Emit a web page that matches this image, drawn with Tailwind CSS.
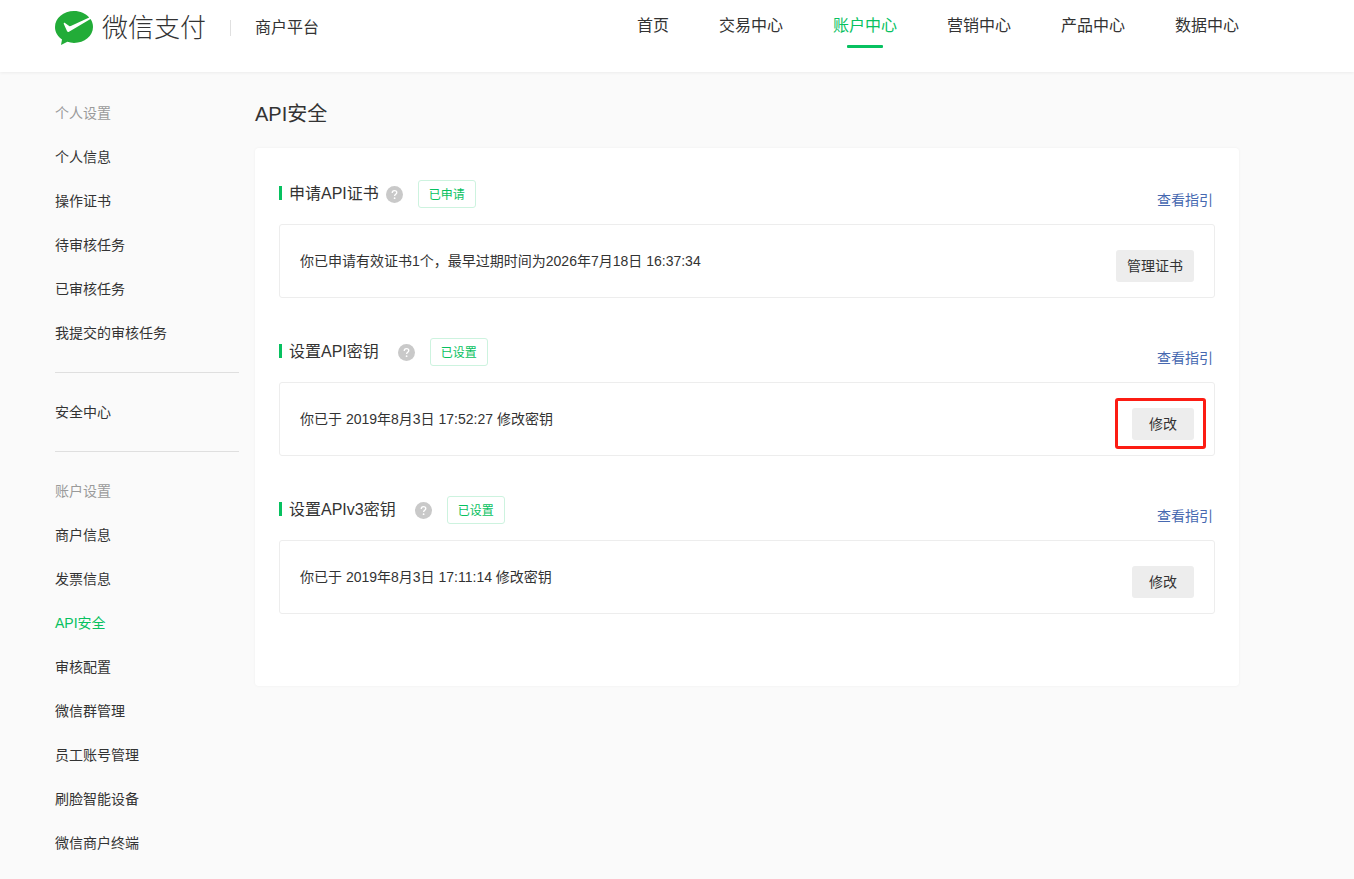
<!DOCTYPE html>
<html lang="zh-CN">
<head>
<meta charset="utf-8">
<meta name="viewport" content="width=device-width, initial-scale=1">
<title>微信支付 商户平台</title>
<script src="https://cdn.jsdelivr.net/npm/@tailwindcss/browser@4"></script>
</head>
<body class="min-h-screen bg-[#fafafa] font-['Liberation_Sans','Noto_Sans_CJK_SC',sans-serif] text-sm text-[#333]">
<header class="flex h-[72px] items-start justify-between bg-white pr-[115px] pl-[55px] shadow-[0_1px_3px_rgba(0,0,0,0.06)]">
  <div class="flex h-14 items-center">
    <a href="#" class="flex items-center gap-[9px] text-[26px] leading-8 font-light text-[#333]">
      <svg class="h-[34px] w-[38px]" viewBox="0 0 38 34" aria-hidden="true">
        <path fill="#22ac38" d="M19 0C8.500 0 0 7.200 0 16c0 5.100 2.700 9.500 7 12.400L6 34l6.400-3.200c2.100.7 4.300 1.100 6.600 1.100 10.500 0 19-7.100 19-15.900 0-2.900-.9-5.700-2.500-8L14 20.800c-.7.400-1.500.2-1.900-.6L8.800 13c-.3-.8.5-1.500 1.200-1l4.200 2.900c.5.300 1.100.3 1.600.1L34.200 6.400C30.700 2.500 25.200 0 19 0Z"/>
      </svg>
      <span>微信支付</span>
    </a>
    <span class="mx-6 h-4 w-px bg-[#e0e0e0]"></span>
    <span class="text-base">商户平台</span>
  </div>
  <nav class="flex gap-[50px] text-base leading-[52px]">
    <a href="#">首页</a>
    <a href="#">交易中心</a>
    <a href="#" class="relative text-[#07c160]">账户中心<span class="absolute top-[45px] left-1/2 h-[3px] w-9 -translate-x-1/2 rounded-[1px] bg-[#07c160]"></span></a>
    <a href="#">营销中心</a>
    <a href="#">产品中心</a>
    <a href="#">数据中心</a>
  </nav>
</header>
<div class="flex gap-4 pr-[115px] pl-[55px] pt-[19px]">
  <aside class="w-[184px] shrink-0 leading-[44px]">
    <h2 class="text-[#9a9a9a]">个人设置</h2>
    <ul>
      <li><a href="#">个人信息</a></li>
      <li><a href="#">操作证书</a></li>
      <li><a href="#">待审核任务</a></li>
      <li><a href="#">已审核任务</a></li>
      <li><a href="#">我提交的审核任务</a></li>
    </ul>
    <hr class="my-[17px] border-[#dfdfdf]">
    <a href="#" class="block">安全中心</a>
    <hr class="my-[17px] border-[#dfdfdf]">
    <h2 class="text-[#9a9a9a]">账户设置</h2>
    <ul>
      <li><a href="#">商户信息</a></li>
      <li><a href="#">发票信息</a></li>
      <li><a href="#" class="text-[#07c160]">API安全</a></li>
      <li><a href="#">审核配置</a></li>
      <li><a href="#">微信群管理</a></li>
      <li><a href="#">员工账号管理</a></li>
      <li><a href="#">刷脸智能设备</a></li>
      <li><a href="#">微信商户终端</a></li>
    </ul>
  </aside>
  <main class="min-w-0 flex-1">
    <h1 class="mb-[10px] text-xl leading-[47px]">API安全</h1>
    <div class="flex flex-col gap-10 rounded bg-white px-6 pt-8 pb-[72px] shadow-[0_0_3px_rgba(0,0,0,0.05)]">
      <section>
        <div class="mb-4 flex h-7 items-center">
          <span class="mb-0.5 h-[14px] w-[3px] bg-[#07c160]"></span>
          <h2 class="ml-[7px] text-base leading-6">申请API证书</h2>
          <button type="button" aria-label="帮助" class="ml-[7px]"><svg class="size-[17px]" viewBox="0 0 17 17"><circle cx="8.500" cy="8.500" r="8.500" fill="#c9c9c9"/><path d="M6.200 6.900C6.200 5.400 7.200 4.600 8.500 4.600s2.300.8 2.300 2c0 1.700-2.200 1.700-2.200 3.400" fill="none" stroke="#fff" stroke-width="1.300"/><circle cx="8.600" cy="12.200" r=".9" fill="#fff"/></svg></button>
          <span class="ml-[15px] flex h-7 w-[58px] items-center justify-center rounded-[3px] border border-[#cdf3df] pt-0.5 text-xs text-[#07c160]">已申请</span>
          <a href="#" class="mr-0.5 ml-auto self-end leading-4 text-[#4668b0]">查看指引</a>
        </div>
        <div class="flex items-start justify-between rounded-[3px] border border-[#ededed] px-5 pt-[25px] pb-[15px]">
          <p class="leading-[22px]">你已申请有效证书1个，最早过期时间为2026年7月18日 16:37:34</p>
          <button type="button" class="h-8 w-[78px] rounded-[3px] bg-[#ededed]">管理证书</button>
        </div>
      </section>
      <section>
        <div class="mb-4 flex h-7 items-center">
          <span class="mb-0.5 h-[14px] w-[3px] bg-[#07c160]"></span>
          <h2 class="ml-[7px] text-base leading-6">设置API密钥</h2>
          <button type="button" aria-label="帮助" class="ml-[19px]"><svg class="size-[17px]" viewBox="0 0 17 17"><circle cx="8.500" cy="8.500" r="8.500" fill="#c9c9c9"/><path d="M6.200 6.900C6.200 5.400 7.200 4.600 8.500 4.600s2.300.8 2.300 2c0 1.700-2.200 1.700-2.200 3.400" fill="none" stroke="#fff" stroke-width="1.300"/><circle cx="8.600" cy="12.200" r=".9" fill="#fff"/></svg></button>
          <span class="ml-[15px] flex h-7 w-[58px] items-center justify-center rounded-[3px] border border-[#cdf3df] pt-0.5 text-xs text-[#07c160]">已设置</span>
          <a href="#" class="mr-0.5 ml-auto self-end leading-4 text-[#4668b0]">查看指引</a>
        </div>
        <div class="flex items-start justify-between rounded-[3px] border border-[#ededed] px-5 pt-[25px] pb-[15px]">
          <p class="leading-[22px]">你已于 2019年8月3日 17:52:27 修改密钥</p>
          <div class="relative">
            <button type="button" class="block h-8 w-[62px] rounded-[3px] bg-[#ededed]">修改</button>
            <span class="pointer-events-none absolute -top-[10px] -right-3 -bottom-[9px] -left-[17px] rounded-[3px] border-3 border-[#fc1c13]"></span>
          </div>
        </div>
      </section>
      <section>
        <div class="mb-4 flex h-7 items-center">
          <span class="mb-0.5 h-[14px] w-[3px] bg-[#07c160]"></span>
          <h2 class="ml-[7px] text-base leading-6">设置APIv3密钥</h2>
          <button type="button" aria-label="帮助" class="ml-[19px]"><svg class="size-[17px]" viewBox="0 0 17 17"><circle cx="8.500" cy="8.500" r="8.500" fill="#c9c9c9"/><path d="M6.200 6.900C6.200 5.400 7.200 4.600 8.500 4.600s2.300.8 2.300 2c0 1.700-2.200 1.700-2.200 3.400" fill="none" stroke="#fff" stroke-width="1.300"/><circle cx="8.600" cy="12.200" r=".9" fill="#fff"/></svg></button>
          <span class="ml-[15px] flex h-7 w-[58px] items-center justify-center rounded-[3px] border border-[#cdf3df] pt-0.5 text-xs text-[#07c160]">已设置</span>
          <a href="#" class="mr-0.5 ml-auto self-end leading-4 text-[#4668b0]">查看指引</a>
        </div>
        <div class="flex items-start justify-between rounded-[3px] border border-[#ededed] px-5 pt-[25px] pb-[15px]">
          <p class="leading-[22px]">你已于 2019年8月3日 17:11:14 修改密钥</p>
          <button type="button" class="h-8 w-[62px] rounded-[3px] bg-[#ededed]">修改</button>
        </div>
      </section>
    </div>
  </main>
</div>
</body>
</html>
